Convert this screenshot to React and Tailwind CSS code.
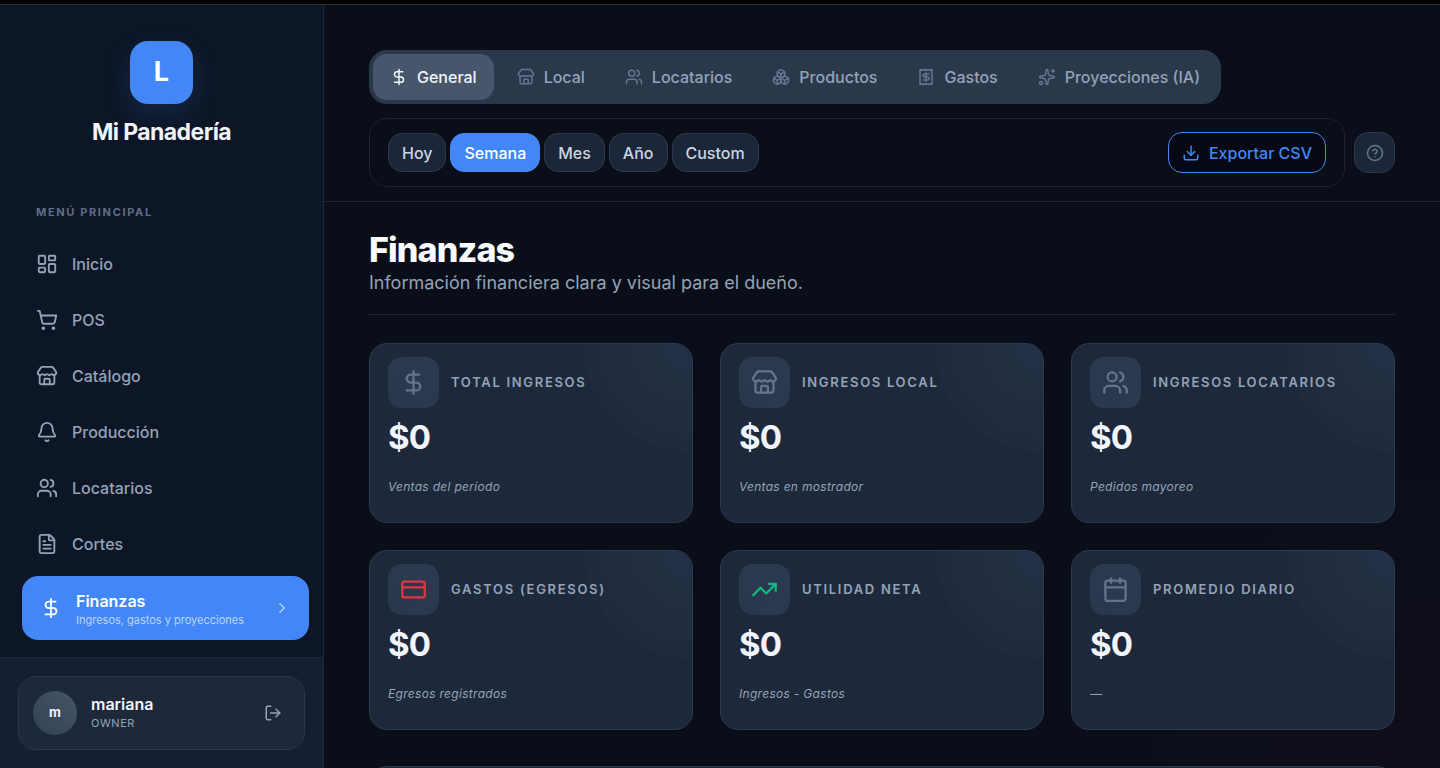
import { useState } from 'react';
import {
    Bell,
    Boxes,
    Calendar,
    ChevronRight,
    CircleQuestionMark,
    CreditCard,
    DollarSign,
    Download,
    FileText,
    LayoutDashboard,
    LogOut,
    Receipt,
    ShoppingCart,
    Sparkles,
    Store,
    TrendingUp,
    Users,
} from 'lucide-react';
import clsx from 'clsx';

const NAV_ITEMS = [
    { label: 'Inicio', icon: LayoutDashboard },
    { label: 'POS', icon: ShoppingCart },
    { label: 'Catálogo', icon: Store },
    { label: 'Producción', icon: Bell },
    { label: 'Locatarios', icon: Users },
    { label: 'Cortes', icon: FileText },
    { label: 'Finanzas', icon: DollarSign, description: 'Ingresos, gastos y proyecciones', active: true },
];

const TABS = [
    { label: 'General', icon: DollarSign },
    { label: 'Local', icon: Store },
    { label: 'Locatarios', icon: Users },
    { label: 'Productos', icon: Boxes },
    { label: 'Gastos', icon: Receipt },
    { label: 'Proyecciones (IA)', icon: Sparkles },
];

const RANGES = ['Hoy', 'Semana', 'Mes', 'Año', 'Custom'];

const STATS = [
    { title: 'Total ingresos', value: '$0', note: 'Ventas del período', icon: DollarSign },
    { title: 'Ingresos local', value: '$0', note: 'Ventas en mostrador', icon: Store },
    { title: 'Ingresos locatarios', value: '$0', note: 'Pedidos mayoreo', icon: Users },
    { title: 'Gastos (egresos)', value: '$0', note: 'Egresos registrados', icon: CreditCard, color: 'text-[#e5343d]' },
    { title: 'Utilidad neta', value: '$0', note: 'Ingresos - Gastos', icon: TrendingUp, color: 'text-[#10b981]' },
    { title: 'Promedio diario', value: '$0', note: '—', icon: Calendar },
];

function NavItem({ item }) {
    const Icon = item.icon;

    if (item.active) {
        return (
            <a
                href="#"
                aria-current="page"
                className="flex h-16 translate-x-1 items-center gap-3.5 rounded-2xl bg-[#4287f5] px-[18px] text-white"
            >
                <Icon className="size-[22px]" />
                <span className="flex-1">
                    <span className="block text-base leading-6 font-semibold">{item.label}</span>
                    <span className="block text-[11px] leading-[14px] text-[#bcd5fd]">{item.description}</span>
                </span>
                <ChevronRight className="size-[18px] text-[#a9c9fc]" />
            </a>
        );
    }

    return (
        <a href="#" className="flex h-12 items-center gap-3.5 rounded-2xl px-[18px] text-[#94a3b8] hover:bg-white/5">
            <Icon className="size-[22px]" />
            <span className="text-base font-medium">{item.label}</span>
        </a>
    );
}

function Sidebar() {
    return (
        <aside className="flex w-[324px] shrink-0 flex-col border-r border-[#1b2636] bg-[#0d1626]">
            {/* Brand */}
            <div className="flex flex-col items-center gap-3 pt-9">
                <div className="flex size-[63px] items-center justify-center rounded-[18px] bg-[#4287f5] text-[27px] font-bold text-white shadow-[0_10px_28px_rgba(59,130,246,0.16)]">
                    L
                </div>
                <h1 className="text-[23px] leading-8 font-bold tracking-tight text-[#f1f5f9]">Mi Panadería</h1>
            </div>

            <nav className="flex flex-1 flex-col gap-2 px-[18px] pt-14">
                <p className="mb-3 px-[18px] text-[11px] leading-4 font-bold tracking-[0.15em] text-[#5f6e85] uppercase">
                    Menú principal
                </p>
                {NAV_ITEMS.map((item) => (
                    <NavItem key={item.label} item={item} />
                ))}
            </nav>

            {/* User */}
            <div className="border-t border-[#1b2738] bg-[#141f32] p-[18px]">
                <div className="flex items-center gap-3.5 rounded-[18px] border border-[#2b3849] bg-[#1d293a] p-3.5">
                    <div className="flex size-11 items-center justify-center rounded-full bg-linear-to-tr from-[#334155] to-[#475569] text-[13px] font-bold text-[#f1f5f9]">
                        m
                    </div>
                    <div className="flex-1">
                        <p className="text-base leading-5 font-semibold text-[#f1f5f9]">mariana</p>
                        <p className="text-[11px] leading-[18px] tracking-wider text-[#94a3b8]">OWNER</p>
                    </div>
                    <button type="button" aria-label="Cerrar sesión" className="p-2 text-[#94a3b8]">
                        <LogOut className="size-[18px]" />
                    </button>
                </div>
            </div>
        </aside>
    );
}

function Toolbar() {
    const [tab, setTab] = useState('General');
    const [range, setRange] = useState('Semana');

    return (
        <header className="flex flex-col items-start gap-3.5 border-b border-[#1e2631] px-[45px] pt-[45px] pb-3.5">
            <div className="flex gap-1.5 rounded-[18px] bg-[#2a384b] p-1">
                {TABS.map(({ label, icon: Icon }) => (
                    <button
                        key={label}
                        type="button"
                        onClick={() => setTab(label)}
                        className={clsx(
                            'flex h-[46px] items-center gap-[9px] rounded-[14px] px-[17px] text-base font-medium',
                            tab === label ? 'bg-[#47566b] text-[#f1f5f9]' : 'text-[#94a3b8]'
                        )}
                    >
                        <Icon className={clsx('size-[18px]', tab === label ? 'text-[#f1f5f9]' : 'text-[#65758c]')} />
                        {label}
                    </button>
                ))}
            </div>

            <div className="flex w-full items-center gap-[9px]">
                <div className="flex flex-1 items-center gap-1 rounded-[18px] border border-[#1c2430] px-[18px] py-[13px]">
                    {RANGES.map((label) => (
                        <button
                            key={label}
                            type="button"
                            onClick={() => setRange(label)}
                            className={clsx(
                                'h-[39px] rounded-[14px] border px-[13px] text-base font-medium',
                                range === label
                                    ? 'border-[#4287f5] bg-[#4287f5] text-white'
                                    : 'border-[#2c394b] bg-[#1b2739] text-[#cbd5e1]'
                            )}
                        >
                            {label}
                        </button>
                    ))}
                    <button
                        type="button"
                        className="ml-auto flex h-[41px] items-center gap-[9px] rounded-[14px] border border-[#4287f5] bg-[#060914] px-[13px] text-base font-medium text-[#4287f5]"
                    >
                        <Download className="size-[18px]" />
                        Exportar CSV
                    </button>
                </div>
                <button
                    type="button"
                    aria-label="Ayuda"
                    className="flex size-[41px] items-center justify-center rounded-[14px] border border-[#2c394b] bg-[#1b2739] text-[#65758c]"
                >
                    <CircleQuestionMark className="size-[18px]" />
                </button>
            </div>
        </header>
    );
}

function StatCard({ title, value, note, icon: Icon, color = 'text-[#64748b]' }) {
    return (
        <article className="relative h-[180px] overflow-hidden rounded-[18px] border border-[#2c3a4c] bg-[#1d293b] px-[18px] py-[13px]">
            {/* Corner glow */}
            <div className="absolute -top-[108px] -right-[108px] size-[216px] rounded-full bg-[radial-gradient(circle,#233049_0%,#232f41_30%,#1f2b3d_70%)]" />
            <div className="relative">
                <div className="flex items-center gap-3">
                    <div
                        className={clsx(
                            'flex size-[51px] items-center justify-center rounded-[14px] bg-linear-to-bl from-[#2c3a51] to-[#29384c]',
                            color
                        )}
                    >
                        <Icon className="size-[27px]" />
                    </div>
                    <h3 className="text-[13px] font-semibold tracking-[0.13em] text-[#94a3b8] uppercase">{title}</h3>
                </div>
                <p className="mt-[9px] text-[33px] leading-10 font-bold tracking-tight text-[#f1f5f9]">{value}</p>
                <p className="mt-[19px] text-xs leading-[22px] tracking-wide text-[#94a3b8] italic">{note}</p>
            </div>
        </article>
    );
}

export default function App() {
    return (
        <div className="flex h-screen flex-col overflow-hidden border-t-4 border-black bg-[#090e18] font-['Inter',sans-serif]">
            <div className="flex min-h-0 flex-1 border-t border-[#2e3033]">
                <Sidebar />
                <main className="min-w-0 flex-1 overflow-y-auto bg-[radial-gradient(circle_at_100%_100%,#0f0e1a_0%,#090e18_35%)] [scrollbar-width:none]">
                    <Toolbar />
                    <div className="px-[45px] pt-7 pb-9">
                        <div className="mb-7 border-b border-[#1e2733] pb-[18px]">
                            <h2 className="text-[34px] leading-10 font-extrabold tracking-tight text-[#f8fafc]">Finanzas</h2>
                            <p className="text-lg leading-[26px] text-[#94a3b8]">
                                Información financiera clara y visual para el dueño.
                            </p>
                        </div>

                        <section className="grid grid-cols-3 gap-[27px]">
                            {STATS.map((stat) => (
                                <StatCard key={stat.title} {...stat} />
                            ))}
                        </section>

                        <section className="mt-9 h-80 rounded-[18px] border border-[#2c3a4c] bg-[#1d293b]" />
                    </div>
                </main>
            </div>
        </div>
    );
}
